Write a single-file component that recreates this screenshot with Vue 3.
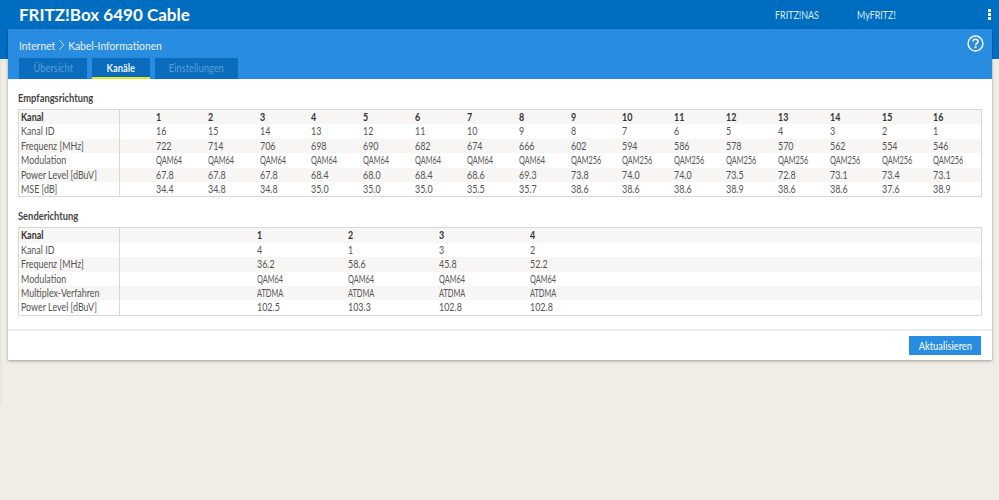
<script setup>
const rx = [
  ['Kanal', ['1','2','3','4','5','6','7','8','9','10','11','12','13','14','15','16']],
  ['Kanal ID', ['16','15','14','13','12','11','10','9','8','7','6','5','4','3','2','1']],
  ['Frequenz [MHz]', ['722','714','706','698','690','682','674','666','602','594','586','578','570','562','554','546']],
  ['Modulation', ['QAM64','QAM64','QAM64','QAM64','QAM64','QAM64','QAM64','QAM64','QAM256','QAM256','QAM256','QAM256','QAM256','QAM256','QAM256','QAM256']],
  ['Power Level [dBuV]', ['67.8','67.8','67.8','68.4','68.0','68.4','68.6','69.3','73.8','74.0','74.0','73.5','72.8','73.1','73.4','73.1']],
  ['MSE [dB]', ['34.4','34.8','34.8','35.0','35.0','35.0','35.5','35.7','38.6','38.6','38.6','38.9','38.6','38.6','37.6','38.9']],
]
const tx = [
  ['Kanal', ['1','2','3','4']],
  ['Kanal ID', ['4','1','3','2']],
  ['Frequenz [MHz]', ['36.2','58.6','45.8','52.2']],
  ['Modulation', ['QAM64','QAM64','QAM64','QAM64']],
  ['Multiplex-Verfahren', ['ATDMA','ATDMA','ATDMA','ATDMA']],
  ['Power Level [dBuV]', ['102.5','103.3','102.8','102.8']],
]
const isCaps = (v) => /[A-Z]/.test(v)
</script>

<template>
  <div class="page">
    <div class="edge"></div>
    <header class="top">
      <div class="brand">FRITZ!Box 6490 Cable</div>
      <nav class="topnav">
        <span class="nas"><b class="sq">FRITZ!NAS</b></span>
        <span class="my"><b class="sq">MyFRITZ!</b></span>
        <span class="dots"><i></i><i></i><i></i></span>
      </nav>
    </header>
    <main class="panel">
      <div class="head">
        <div class="crumbs">
          <span>Internet</span>
          <svg class="chev" width="7" height="12" viewBox="0 0 7 12"><path d="M1 1l5 5-5 5" fill="none" stroke="#cfe4f7" stroke-width="1"/></svg>
          <span>Kabel-Informationen</span>
        </div>
        <svg class="help" width="17" height="17" viewBox="0 0 17 17">
          <circle cx="8.5" cy="8.5" r="7.4" fill="none" stroke="#fff" stroke-width="1.5"/>
          <path d="M6 6.6c0-1.5 1.1-2.3 2.5-2.3s2.5.8 2.5 2.2c0 1.9-2.4 1.9-2.4 3.7" fill="none" stroke="#fff" stroke-width="1.6"/>
          <rect x="7.6" y="11.2" width="1.9" height="1.9" fill="#fff"/>
        </svg>
        <div class="tabs">
          <span class="tab t1"><b class="sq c">Übersicht</b></span>
          <span class="tab t2"><b class="sq c">Kanäle</b></span>
          <span class="tab t3"><b class="sq c">Einstellungen</b></span>
        </div>
      </div>
      <div class="body">
        <h2><b class="sq">Empfangsrichtung</b></h2>
        <div class="tbl rx">
          <div v-for="(r, i) in rx" :key="r[0]" class="row" :class="{ head1: i === 0 }">
            <div class="lbl"><b class="sq">{{ r[0] }}</b></div>
            <div class="sp"></div>
            <div v-for="(v, j) in r[1]" :key="j" class="val"><b class="sq" :class="{ caps: isCaps(v) }">{{ v }}</b></div>
          </div>
        </div>
        <h2><b class="sq">Senderichtung</b></h2>
        <div class="tbl tx">
          <div v-for="(r, i) in tx" :key="r[0]" class="row" :class="{ head1: i === 0 }">
            <div class="lbl"><b class="sq">{{ r[0] }}</b></div>
            <div class="sp"></div>
            <div v-for="(v, j) in r[1]" :key="j" class="val"><b class="sq" :class="{ caps: isCaps(v) }">{{ v }}</b></div>
          </div>
        </div>
      </div>
      <footer class="foot">
        <span class="btn"><b class="sq c">Aktualisieren</b></span>
      </footer>
    </main>
  </div>
</template>

<style>
html, body { margin: 0; background: #f0ede6; }
</style>

<style scoped>
.page {
  position: relative;
  height: 500px;
  overflow: hidden;
  background: linear-gradient(#006ec0 59px, #f0ede6 59px);
  font-family: "Lato", sans-serif;
  font-size: 11px;
  color: #555;
}
.sq {
  display: inline-block;
  font-weight: inherit;
  white-space: nowrap;
  transform: scaleX(.85);
  transform-origin: left center;
}
.sq.c { transform-origin: center; }
.sq.caps { transform: scaleX(.7); }
.edge {
  position: absolute;
  left: 0;
  top: 59px;
  width: 2px;
  height: 346px;
  background: #e9e6df;
}
.top {
  height: 29px;
  display: flex;
  align-items: center;
  justify-content: space-between;
}
.brand {
  margin-left: 19px;
  font-size: 17px;
  font-weight: 700;
  color: #fff;
  white-space: nowrap;
}
.topnav { display: flex; align-items: center; color: #dbeaf7; font-size: 10.5px; }
.nas { width: 82px; }
.my { width: 131px; }
.dots { display: flex; flex-direction: column; gap: 1px; width: 3px; margin-right: 8px; }
.dots i { display: block; width: 3px; height: 3px; background: #fff; }
.panel {
  margin: 0 7px 0 8px;
  background: #fff;
  box-shadow: 0 1px 3px rgba(0, 0, 0, .35);
}
.head {
  position: relative;
  height: 50px;
  background: #288ce1;
}
.crumbs {
  display: flex;
  align-items: center;
  gap: 4px;
  margin: 0 0 0 11px;
  padding-top: 9px;
  width: 300px;
  height: 14px;
  color: #e8f2fb;
  font-size: 12px;
  transform: scaleX(.86);
  transform-origin: left center;
}
.help { position: absolute; right: 8px; top: 6px; }
.tabs { display: flex; margin: 6px 0 0 11px; height: 21px; }
.tab {
  height: 21px;
  line-height: 20px;
  text-align: center;
  background: #0a6cbc;
  color: #5a9fd8;
  box-sizing: border-box;
  font-size: 11px;
}
.t1 { width: 68px; margin-right: 5px; }
.t2 { width: 58px; margin-right: 5px; color: #e6f1fa; border-bottom: 2px solid #e6e61e; font-weight: 700; }
.t3 { width: 83px; }
.body { padding: 0 10px 13px; }
h2 {
  margin: 0;
  padding-top: 12px;
  height: 18px;
  font-size: 11px;
  font-weight: 700;
  color: #444;
}
.tbl { border: 1px solid #d9d8d3; font-size: 10.5px; }
.row { display: flex; height: 14.4px; line-height: 14.4px; }
.row:nth-child(odd) { background: #f7f6f4; }
.lbl {
  width: 101px;
  flex: none;
  padding-left: 2px;
  box-sizing: border-box;
  border-right: 1px solid #d9d8d3;
}
.head1 { font-weight: 700; color: #333; }
.rx .sp { width: 33px; flex: none; }
.rx .val { width: 51.84px; flex: none; padding-left: 3px; box-sizing: border-box; }
.tx .sp { width: 134px; flex: none; }
.tx .val { width: 91px; flex: none; padding-left: 3px; box-sizing: border-box; }
.foot {
  display: flex;
  justify-content: flex-end;
  align-items: center;
  height: 29px;
  border-top: 2px solid #eeedeb;
  padding-right: 11px;
}
.btn {
  width: 72px;
  height: 19px;
  line-height: 19px;
  text-align: center;
  background: #288ce1;
  color: #fff;
  font-size: 11px;
}
</style>
